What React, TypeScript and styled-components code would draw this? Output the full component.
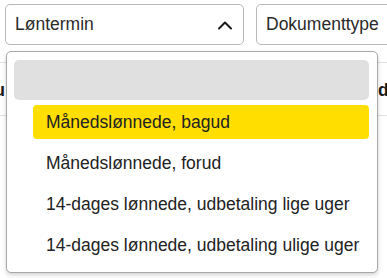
import React from "react";
import styled, { createGlobalStyle } from "styled-components";

const GlobalStyle = createGlobalStyle`
	html, body {
		margin: 0;
		padding: 0;
		background: #ffffff;
	}
	body {
		font-family: "Liberation Sans", Arial, sans-serif;
		color: #222222;
	}
`;

const Page = styled.div`
	position: relative;
	width: 387px;
	height: 278px;
	overflow: hidden;
	background: #ffffff;
`;

const Filters = styled.div`
	display: flex;
	gap: 12px;
	padding: 4px 0 0 5px;
`;

const SelectBox = styled.div<{ width: number }>`
	flex: 0 0 ${(props) => props.width}px;
	box-sizing: border-box;
	height: 41px;
	border: 1px solid #b8b8b8;
	border-radius: 5px;
	display: flex;
	align-items: center;
	justify-content: space-between;
	padding: 0 10px 0 9px;
	font-size: 17.5px;
	color: #2a2a2a;
	white-space: nowrap;
`;

const TableHead = styled.div`
	margin-top: 17px;
	height: 54px;
	box-sizing: border-box;
	border-top: 1px solid #e2e2e2;
	border-bottom: 1px solid #e2e2e2;
	display: flex;
	justify-content: space-between;
	align-items: center;
	font-weight: 700;
	font-size: 17.5px;
	color: #1a1a1a;
`;

const HeadCell = styled.div<{ align: "left" | "right" }>`
	width: ${(props) => (props.align === "left" ? 5 : 9)}px;
	overflow: hidden;
	display: flex;
	justify-content: ${(props) => (props.align === "left" ? "flex-end" : "flex-start")};
	white-space: nowrap;
	padding-top: 2px;
`;

const Menu = styled.div`
	position: absolute;
	left: 6px;
	top: 51px;
	width: 372px;
	height: 222px;
	box-sizing: border-box;
	border: 1px solid #a8a8a8;
	border-radius: 5px;
	background: #ffffff;
	box-shadow: 0 2px 4px rgba(0, 0, 0, 0.18);
	padding: 8px 8px 0 7px;
	display: flex;
	flex-direction: column;
	gap: 7px;
`;

const EmptyOption = styled.div`
	height: 40px;
	border-radius: 5px;
	background: #e0e0e0;
	margin-bottom: -2px;
`;

const Option = styled.div<{ active?: boolean }>`
	height: 34px;
	margin-left: 19px;
	border-radius: 4px;
	padding-left: 13px;
	display: flex;
	align-items: center;
	font-size: 17.5px;
	color: #222222;
	background: ${(props) => (props.active ? "#ffde00" : "transparent")};
	white-space: nowrap;
`;

const ChevronUp = () => (
	<svg width="16" height="10" viewBox="0 0 16 10" fill="none">
		<path d="M2 8.5 L8 2.5 L14 8.5" stroke="#1a1a1a" strokeWidth="2" strokeLinecap="round" strokeLinejoin="round" />
	</svg>
);

const options = [
	"Månedslønnede, bagud",
	"Månedslønnede, forud",
	"14-dages lønnede, udbetaling lige uger",
	"14-dages lønnede, udbetaling ulige uger",
];

export default function App() {
	return (
		<Page>
			<GlobalStyle />
			<Filters>
				<SelectBox width={239}>
					<span>Løntermin</span>
					<ChevronUp />
				</SelectBox>
				<SelectBox width={160}>
					<span>Dokumenttype</span>
				</SelectBox>
			</Filters>
			<TableHead>
				<HeadCell align="left">Nu</HeadCell>
				<HeadCell align="right">dato</HeadCell>
			</TableHead>
			<Menu>
				<EmptyOption />
				{options.map((o, i) => (
					<Option key={o} active={i === 0}>
						{o}
					</Option>
				))}
			</Menu>
		</Page>
	);
}
